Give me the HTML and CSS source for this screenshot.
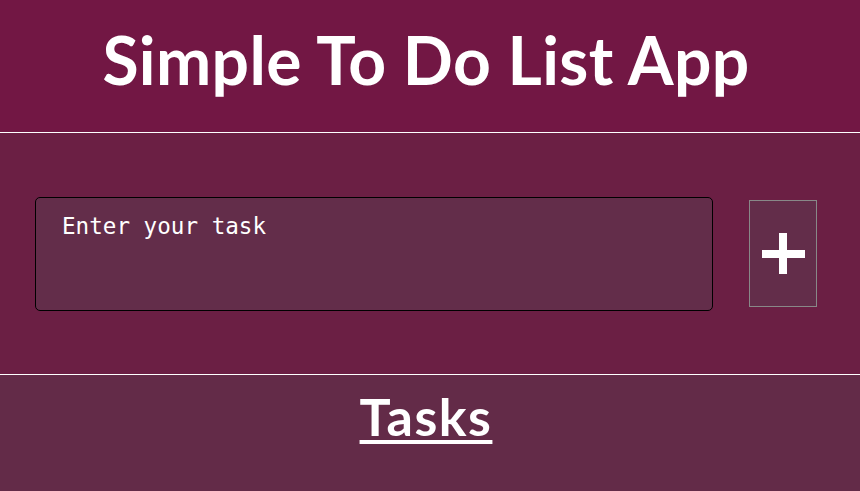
FILE: index.html
```html
<!DOCTYPE html>
<html>
<head>
<meta charset="utf-8">
<link rel="stylesheet" href="styles.css">
</head>
<body>
<header class="header">
  <h1 class="title">Simple To Do List App</h1>
</header>
<section class="form">
  <textarea class="task-input" placeholder="Enter your task"></textarea>
  <button class="add-btn" aria-label="Add task">
    <svg width="43" height="41" viewBox="0 0 43 41"><rect x="17" y="0" width="8" height="41" fill="#fff"/><rect x="0" y="17" width="43" height="8" fill="#fff"/></svg>
  </button>
</section>
<section class="tasks">
  <h2 class="tasks-title">Tasks</h2>
</section>
</body>
</html>
```
FILE: styles.css
```css
html, body {
  margin: 0;
  padding: 0;
}
body {
  background: #632b48;
  font-family: Lato, "Open Sans", sans-serif;
  color: #fff;
  height: 491px;
  overflow: hidden;
}
.header {
  background: #721744;
  height: 132px;
  border-bottom: 1px solid #fff;
  display: flex;
  justify-content: center;
  padding-right: 8px;
}
.title {
  margin: 0;
  padding-top: 22px;
  font-size: 66px;
  font-weight: 700;
  line-height: 76px;
  letter-spacing: 0.35px;
}
.form {
  background: #6b1f44;
  height: 241px;
  border-bottom: 1px solid #fff;
  display: flex;
  align-items: center;
  padding: 0 43px 0 35px;
  gap: 36px;
}
.task-input {
  box-sizing: border-box;
  width: 678px;
  height: 114px;
  margin: 0;
  background: #632d4a;
  border: 1px solid #000;
  border-radius: 5px;
  padding: 15px 26px;
  font-family: "DejaVu Sans Mono", monospace;
  font-size: 22.6px;
  color: #fff;
  resize: none;
  outline: none;
}
.task-input::placeholder {
  color: #fff;
  opacity: 1;
}
.add-btn {
  box-sizing: border-box;
  width: 68px;
  height: 107px;
  margin: 0;
  background: #632d4a;
  border: 1px solid #888;
  padding: 0;
  display: flex;
  align-items: center;
  justify-content: center;
}
.add-btn svg {
  display: block;
}
.tasks {
  display: flex;
  justify-content: center;
  padding-right: 8px;
}
.tasks-title {
  margin: 0;
  padding-top: 11px;
  font-size: 52px;
  font-weight: 700;
  line-height: 60px;
  letter-spacing: 1.5px;
  text-decoration: underline;
  text-decoration-thickness: 4px;
  text-underline-offset: 4px;
}
```
